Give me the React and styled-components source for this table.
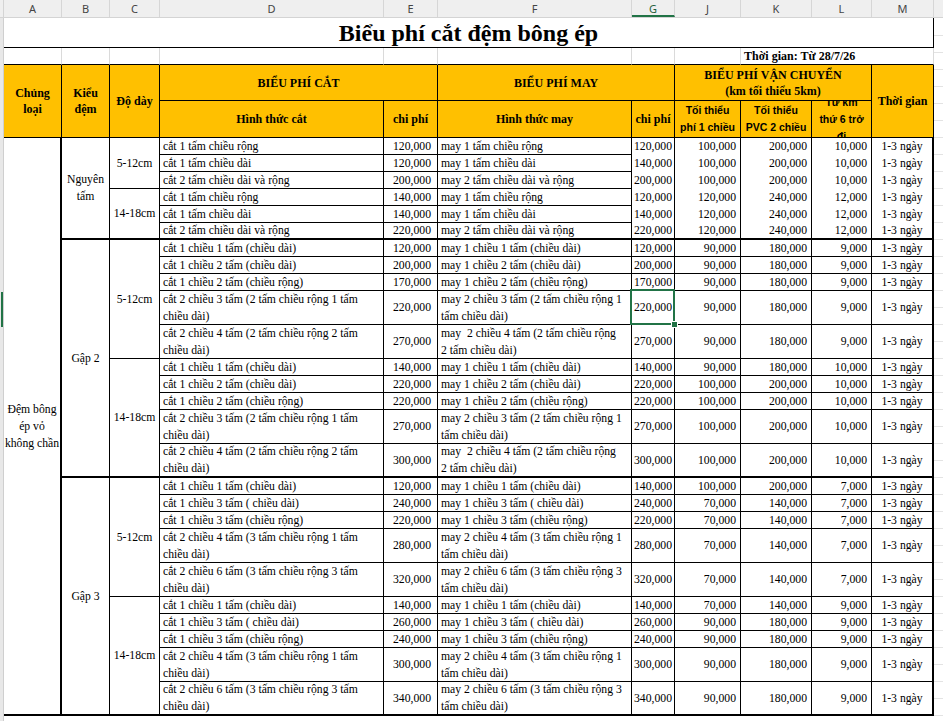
import React from 'react';
import styled, { createGlobalStyle, css } from 'styled-components';

const GlobalStyle = createGlobalStyle`
  html, body {
    margin: 0;
    padding: 0;
    background: #ffffff;
  }
  body {
    width: 943px;
    height: 721px;
    overflow: hidden;
    font-family: "Liberation Serif", "Times New Roman", serif;
  }
`;

const COLS = [
  { key: 'A', w: 58 },
  { key: 'B', w: 48 },
  { key: 'C', w: 50 },
  { key: 'D', w: 224 },
  { key: 'E', w: 54 },
  { key: 'F', w: 194 },
  { key: 'G', w: 43 },
  { key: 'J', w: 66 },
  { key: 'K', w: 71 },
  { key: 'L', w: 60 },
  { key: 'M', w: 62 },
];

const LINES = {
  none: 'none',
  grid: '1px solid #dadada',
  thin: '1px solid #000000',
  thick: '2px solid #000000',
};

const TIME = '1-3 ngày';

// [hình thức cắt, chi phí, hình thức may, chi phí, tối thiểu 1 chiều, PVC 2 chiều, từ km thứ 6]
const GROUPS = [
  {
    label: 'Nguyên\ntấm',
    open: true,
    subs: [
      {
        size: '5-12cm',
        rows: [
          ['cắt 1 tấm chiều rộng', '120,000', 'may 1 tấm chiều rộng', '120,000', '100,000', '200,000', '10,000'],
          ['cắt 1 tấm chiều dài', '120,000', 'may 1 tấm chiều dài', '140,000', '100,000', '200,000', '10,000'],
          ['cắt 2 tấm chiều dài và rộng', '200,000', 'may 2 tấm chiều dài và rộng', '200,000', '100,000', '200,000', '10,000'],
        ],
      },
      {
        size: '14-18cm',
        rows: [
          ['cắt 1 tấm chiều rộng', '140,000', 'may 1 tấm chiều rộng', '120,000', '120,000', '240,000', '12,000'],
          ['cắt 1 tấm chiều dài', '140,000', 'may 1 tấm chiều dài', '140,000', '120,000', '240,000', '12,000'],
          ['cắt 2 tấm chiều dài và rộng', '220,000', 'may 2 tấm chiều dài và rộng', '220,000', '120,000', '240,000', '12,000'],
        ],
      },
    ],
  },
  {
    label: 'Gập 2',
    subs: [
      {
        size: '5-12cm',
        rows: [
          ['cắt 1 chiều 1 tấm (chiều dài)', '120,000', 'may 1 chiều 1 tấm (chiều dài)', '120,000', '90,000', '180,000', '9,000'],
          ['cắt 1 chiều 2 tấm (chiều dài)', '200,000', 'may 1 chiều 2 tấm (chiều dài)', '200,000', '90,000', '180,000', '9,000'],
          ['cắt 1 chiều 2 tấm (chiều rộng)', '170,000', 'may 1 chiều 2 tấm (chiều rộng)', '170,000', '90,000', '180,000', '9,000'],
          ['cắt 2 chiều 3 tấm (2 tấm chiều rộng 1 tấm\nchiều dài)', '220,000', 'may 2 chiều 3 tấm (2 tấm chiều rộng 1\ntấm chiều dài)', '220,000', '90,000', '180,000', '9,000', true],
          ['cắt 2 chiều 4 tấm (2 tấm chiều rộng 2 tấm\nchiều dài)', '270,000', 'may  2 chiều 4 tấm (2 tấm chiều rộng\n2 tấm chiều dài)', '270,000', '90,000', '180,000', '9,000'],
        ],
      },
      {
        size: '14-18cm',
        rows: [
          ['cắt 1 chiều 1 tấm (chiều dài)', '140,000', 'may 1 chiều 1 tấm (chiều dài)', '140,000', '90,000', '180,000', '10,000'],
          ['cắt 1 chiều 2 tấm (chiều dài)', '220,000', 'may 1 chiều 2 tấm (chiều dài)', '220,000', '100,000', '200,000', '10,000'],
          ['cắt 1 chiều 2 tấm (chiều rộng)', '220,000', 'may 1 chiều 2 tấm (chiều rộng)', '220,000', '100,000', '200,000', '10,000'],
          ['cắt 2 chiều 3 tấm (2 tấm chiều rộng 1 tấm\nchiều dài)', '270,000', 'may 2 chiều 3 tấm (2 tấm chiều rộng 1\ntấm chiều dài)', '270,000', '100,000', '200,000', '10,000'],
          ['cắt 2 chiều 4 tấm (2 tấm chiều rộng 2 tấm\nchiều dài)', '300,000', 'may  2 chiều 4 tấm (2 tấm chiều rộng\n2 tấm chiều dài)', '300,000', '100,000', '200,000', '10,000'],
        ],
      },
    ],
  },
  {
    label: 'Gập 3',
    subs: [
      {
        size: '5-12cm',
        rows: [
          ['cắt 1 chiều 1 tấm (chiều dài)', '120,000', 'may 1 chiều 1 tấm (chiều dài)', '140,000', '100,000', '200,000', '7,000'],
          ['cắt 1 chiều 3 tấm ( chiều dài)', '240,000', 'may 1 chiều 3 tấm ( chiều dài)', '240,000', '70,000', '140,000', '7,000'],
          ['cắt 1 chiều 3 tấm (chiều rộng)', '220,000', 'may 1 chiều 3 tấm (chiều rộng)', '220,000', '70,000', '140,000', '7,000'],
          ['cắt 2 chiều 4 tấm (3 tấm chiều rộng 1 tấm\nchiều dài)', '280,000', 'may 2 chiều 4 tấm (3 tấm chiều rộng 1\ntấm chiều dài)', '280,000', '70,000', '140,000', '7,000'],
          ['cắt 2 chiều 6 tấm (3 tấm chiều rộng 3 tấm\nchiều dài)', '320,000', 'may 2 chiều 6 tấm (3 tấm chiều rộng 3\ntấm chiều dài)', '320,000', '70,000', '140,000', '7,000'],
        ],
      },
      {
        size: '14-18cm',
        rows: [
          ['cắt 1 chiều 1 tấm (chiều dài)', '140,000', 'may 1 chiều 1 tấm (chiều dài)', '140,000', '70,000', '140,000', '9,000'],
          ['cắt 1 chiều 3 tấm ( chiều dài)', '260,000', 'may 1 chiều 3 tấm ( chiều dài)', '260,000', '90,000', '180,000', '9,000'],
          ['cắt 1 chiều 3 tấm (chiều rộng)', '240,000', 'may 1 chiều 3 tấm (chiều rộng)', '240,000', '90,000', '180,000', '9,000'],
          ['cắt 2 chiều 4 tấm (3 tấm chiều rộng 1 tấm\nchiều dài)', '300,000', 'may 2 chiều 4 tấm (3 tấm chiều rộng 1\ntấm chiều dài)', '300,000', '90,000', '180,000', '9,000'],
          ['cắt 2 chiều 6 tấm (3 tấm chiều rộng 3 tấm\nchiều dài)', '340,000', 'may 2 chiều 6 tấm (3 tấm chiều rộng 3\ntấm chiều dài)', '340,000', '90,000', '180,000', '9,000'],
        ],
      },
    ],
  },
];

const tracksOf = (row) => (row[0].includes('\n') ? 2 : 1);
const subTracks = (sub) => sub.rows.reduce((n, r) => n + tracksOf(r), 0);
const groupTracks = (g) => g.subs.reduce((n, s) => n + subTracks(s), 0);
const TOTAL_TRACKS = GROUPS.reduce((n, g) => n + groupTracks(g), 0);

/* ---------- column letters bar ---------- */

const ColBar = styled.div`
  display: flex;
  height: 18px;
  box-sizing: border-box;
  background: #efefef;
  border-bottom: 1px solid #d4d4d4;
`;

const Corner = styled.div`
  width: 4px;
  flex: none;
  box-sizing: border-box;
  border-right: 1px solid #d4d4d4;
`;

const ColLetter = styled.div`
  width: ${p => p.$w}px;
  flex: none;
  box-sizing: border-box;
  display: flex;
  align-items: center;
  justify-content: center;
  border-right: 1px solid #d6d6d6;
  font-family: "Noto Sans", "Liberation Sans", sans-serif;
  font-size: 11px;
  color: #444444;
  ${p => p.$active && css`
    border-bottom: 2px solid #217346;
    padding-top: 2px;
    color: #1f5f3b;
  `}
`;

const ColFill = styled.div`
  flex: 1;
`;

/* ---------- sheet ---------- */

const Sheet = styled.div`
  display: flex;
  align-items: flex-start;
`;

const RowStrip = styled.div`
  width: 4px;
  flex: none;
  align-self: stretch;
  box-sizing: border-box;
  border-right: 1px solid #cfcfcf;
  background:
    linear-gradient(#217346, #217346) no-repeat 1px 274px / 3px 35px,
    #e8e8e8;
`;

const Grid = styled.div`
  display: grid;
  grid-template-columns: ${COLS.map(c => `${c.w}px`).join(' ')};
  grid-template-rows: 30px 17px 36px 37px;
  grid-auto-rows: 17px;
  flex: none;
`;

const GridFill = styled.div`
  flex: 1;
  align-self: stretch;
  min-height: 703px;
  background: repeating-linear-gradient(to bottom, transparent 0 16px, #e3e3e3 16px 17px);
  background-position: 0 1px;
`;

const Cell = styled.div`
  grid-column: span ${p => p.$cs || 1};
  grid-row: span ${p => p.$rs || 1};
  position: relative;
  box-sizing: border-box;
  display: flex;
  align-items: center;
  justify-content: ${p => ({ left: 'flex-start', right: 'flex-end', center: 'center' }[p.$align || 'left'])};
  text-align: ${p => p.$align || 'left'};
  padding: 0 ${p => (p.$pad ?? 3)}px;
  border-right: ${p => LINES[p.$right || 'thin']};
  border-bottom: ${p => LINES[p.$bottom || 'thin']};
  font-size: 11.7px;
  line-height: 17px;
  color: #000000;
  white-space: pre-wrap;
  overflow: hidden;
  ${p => p.$selected && css`
    overflow: visible;
    z-index: 2;
    &::after {
      content: '';
      position: absolute;
      left: -2px;
      top: -2px;
      right: -1px;
      bottom: -1px;
      border: 2px solid #217346;
      pointer-events: none;
    }
    &::before {
      content: '';
      position: absolute;
      right: -4px;
      bottom: -4px;
      width: 5px;
      height: 5px;
      background: #217346;
      border: 1px solid #ffffff;
      z-index: 3;
    }
  `}
`;

const TitleCell = styled(Cell)`
  grid-column: span ${COLS.length};
  justify-content: center;
  font-size: 24px;
  font-weight: bold;
  line-height: 30px;
`;

const NoteCell = styled(Cell)`
  font-size: 12px;
  font-weight: bold;
  white-space: nowrap;
  overflow: visible;
`;

const HeadCell = styled(Cell)`
  justify-content: center;
  text-align: center;
  white-space: pre-line;
  background: #ffc000;
  font-size: 12px;
  font-weight: bold;
  line-height: 16px;
`;

const SubHead = styled(HeadCell)`
  font-family: "Liberation Sans", Arial, sans-serif;
  font-size: 10.5px;
  line-height: 17px;
`;

const LabelCell = styled(Cell)`
  justify-content: center;
  text-align: center;
  white-space: pre;
`;

function HeaderRows() {
  return (
    <>
      <TitleCell $align="center">Biểu phí cắt đệm bông ép</TitleCell>

      {COLS.slice(0, 8).map(c => (
        <Cell key={`n-${c.key}`} $right="grid" />
      ))}
      <NoteCell $cs={3} $right="grid">Thời gian: Từ 28/7/26</NoteCell>

      <HeadCell $rs={2}>{'Chủng\nloại'}</HeadCell>
      <HeadCell $rs={2}>{'Kiểu\nđệm'}</HeadCell>
      <HeadCell $rs={2}>Độ dày</HeadCell>
      <HeadCell $cs={2}>BIỂU PHÍ CẮT</HeadCell>
      <HeadCell $cs={2}>BIỂU PHÍ MAY</HeadCell>
      <HeadCell $cs={3}>{'BIỂU PHÍ VẬN CHUYỂN\n(km tối thiểu 5km)'}</HeadCell>
      <HeadCell $rs={2}>Thời gian</HeadCell>

      <HeadCell>Hình thức cắt</HeadCell>
      <HeadCell>chi phí</HeadCell>
      <HeadCell>Hình thức may</HeadCell>
      <HeadCell $pad={0}>chi phí</HeadCell>
      <SubHead>{'Tối thiểu\nphí 1 chiều'}</SubHead>
      <SubHead>{'Tối thiểu\nPVC 2 chiều'}</SubHead>
      <SubHead $pad={1}>{'Từ km\nthứ 6 trở\nđi'}</SubHead>
    </>
  );
}

function BodyRows() {
  const cells = [
    <LabelCell key="kind" $rs={TOTAL_TRACKS} $pad={0} $right="thick" $bottom="thick">
      {'Đệm bông\nép vỏ\nkhông chần'}
    </LabelCell>,
  ];

  GROUPS.forEach((g, gi) => {
    g.subs.forEach((s, si) => {
      const lastSub = si === g.subs.length - 1;
      s.rows.forEach((r, ri) => {
        const k = `${gi}-${si}-${ri}`;
        const rs = tracksOf(r);
        const lastRow = lastSub && ri === s.rows.length - 1;
        const bottom = lastRow ? 'thick' : 'thin';
        const side = lastRow ? 'thick' : g.open ? 'none' : 'thin';
        const [cut, cutPrice, sew, sewPrice, one, two, perKm, selected] = r;

        if (si === 0 && ri === 0) {
          cells.push(
            <LabelCell key={`g${k}`} $rs={groupTracks(g)} $pad={0} $bottom="thick">{g.label}</LabelCell>
          );
        }
        if (ri === 0) {
          cells.push(
            <LabelCell key={`s${k}`} $rs={subTracks(s)} $pad={0} $bottom={lastSub ? 'thick' : 'thin'}>
              {s.size}
            </LabelCell>
          );
        }
        cells.push(
          <Cell key={`d${k}`} $rs={rs} $bottom={bottom}>{cut}</Cell>,
          <Cell key={`e${k}`} $rs={rs} $bottom={bottom} $align="right" $pad={6}>{cutPrice}</Cell>,
          <Cell key={`f${k}`} $rs={rs} $bottom={bottom}>{sew}</Cell>,
          <Cell key={`g2${k}`} $rs={rs} $bottom={side} $align="center" $pad={0} $selected={selected}>{sewPrice}</Cell>,
          <Cell key={`j${k}`} $rs={rs} $bottom={side} $align="right" $pad={4}>{one}</Cell>,
          <Cell key={`k${k}`} $rs={rs} $bottom={side} $align="right" $pad={4}>{two}</Cell>,
          <Cell key={`l${k}`} $rs={rs} $bottom={side} $align="right" $pad={4}>{perKm}</Cell>,
          <Cell key={`m${k}`} $rs={rs} $bottom={side} $right="thick" $align="center" $pad={0}>{TIME}</Cell>
        );
      });
    });
  });

  return <>{cells}</>;
}

export default function App() {
  return (
    <>
      <GlobalStyle />
      <ColBar>
        <Corner />
        {COLS.map(c => (
          <ColLetter key={c.key} $w={c.w} $active={c.key === 'G'}>{c.key}</ColLetter>
        ))}
        <ColFill />
      </ColBar>
      <Sheet>
        <RowStrip />
        <Grid>
          <HeaderRows />
          <BodyRows />
        </Grid>
        <GridFill />
      </Sheet>
    </>
  );
}
